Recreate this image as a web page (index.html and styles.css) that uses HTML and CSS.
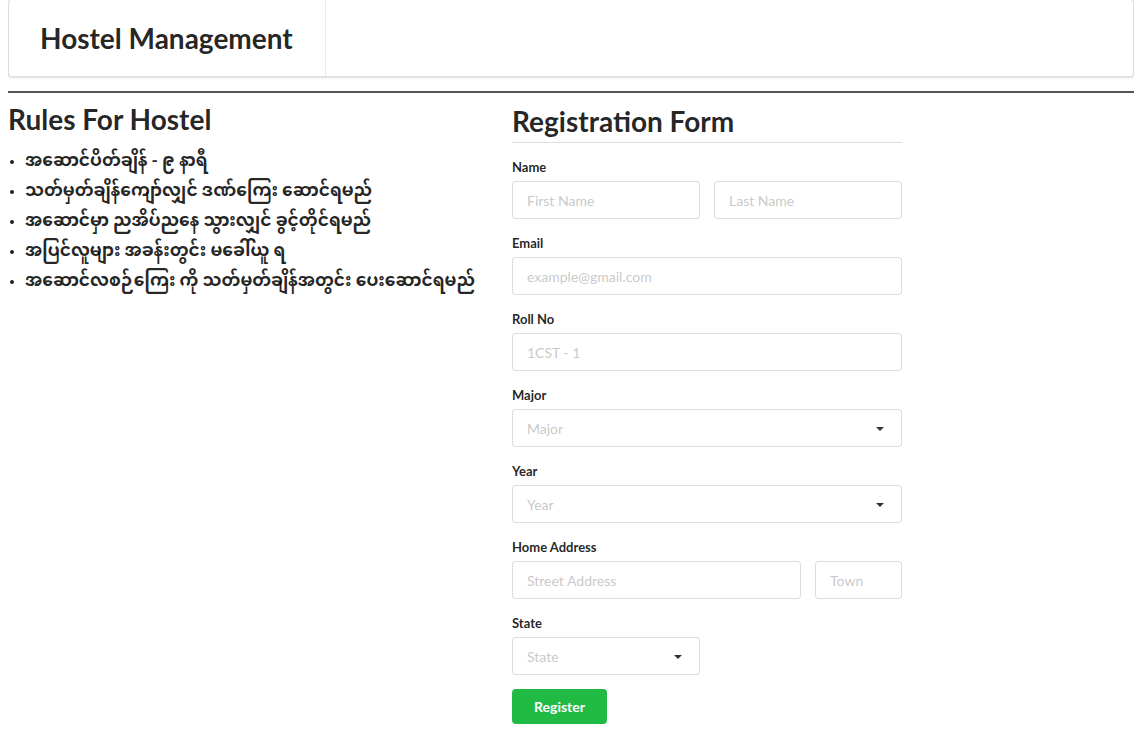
FILE: index.html
```html
<!DOCTYPE html>
<html lang="en">
<head>
<meta charset="utf-8">
<title>Hostel Management</title>
<link rel="stylesheet" href="styles.css">
</head>
<body>
<header class="menu">
  <div class="menu-item brand">Hostel Management</div>
</header>
<hr class="rule">
<main class="layout">
  <section class="rules">
    <h2 class="title">Rules For Hostel</h2>
    <ul class="rule-list">
      <li>အဆောင်ပိတ်ချိန် - ၉ နာရီ</li>
      <li>သတ်မှတ်ချိန်ကျော်လျှင် ဒဏ်ကြေး ဆောင်ရမည်</li>
      <li>အဆောင်မှာ ညအိပ်ညနေ သွားလျှင် ခွင့်တိုင်ရမည်</li>
      <li>အပြင်လူများ အခန်းတွင်း မခေါ်ယူ ရ</li>
      <li>အဆောင်လစဉ်ကြေး ကို သတ်မှတ်ချိန်အတွင်း ပေးဆောင်ရမည်</li>
    </ul>
  </section>
  <form class="form">
    <h2 class="title dividing">Registration Form</h2>
    <div class="field">
      <label class="label">Name</label>
      <div class="row half">
        <input class="input" placeholder="First Name">
        <input class="input" placeholder="Last Name">
      </div>
    </div>
    <div class="field">
      <label class="label">Email</label>
      <input class="input" placeholder="example@gmail.com">
    </div>
    <div class="field">
      <label class="label">Roll No</label>
      <input class="input" placeholder="1CST - 1">
    </div>
    <div class="field">
      <label class="label">Major</label>
      <div class="dropdown"><span class="placeholder">Major</span><span class="caret"></span></div>
    </div>
    <div class="field">
      <label class="label">Year</label>
      <div class="dropdown"><span class="placeholder">Year</span><span class="caret"></span></div>
    </div>
    <div class="field">
      <label class="label">Home Address</label>
      <div class="row address">
        <input class="input" placeholder="Street Address">
        <input class="input" placeholder="Town">
      </div>
    </div>
    <div class="field">
      <label class="label">State</label>
      <div class="row half">
        <div class="dropdown"><span class="placeholder">State</span><span class="caret"></span></div>
      </div>
    </div>
    <button type="button" class="button">Register</button>
  </form>
</main>
</body>
</html>
```

FILE: styles.css
```css
* { box-sizing: border-box; }

body {
  margin: 0 9px 0 8px;
  font-family: Lato, "Noto Sans Myanmar", Padauk, "Myanmar Text", "Noto Sans", sans-serif;
  font-size: 14px;
  line-height: 1.4285em;
  color: rgba(0, 0, 0, 0.87);
  background: #fff;
}

.menu {
  display: flex;
  margin-top: -1px;
  height: 78px;
  border: 1px solid rgba(34, 36, 38, 0.15);
  border-radius: 4px;
  box-shadow: 0 1px 2px 0 rgba(34, 36, 38, 0.15);
  background: #fff;
}

.menu-item {
  display: flex;
  align-items: center;
  padding: 0 32px 1px 31px;
  border-right: 1px solid rgba(34, 36, 38, 0.1);
}

.brand {
  font-size: 28px;
  font-weight: 700;
  color: rgba(0, 0, 0, 0.87);
}

.rule {
  margin: 14px 0 0;
  height: 2px;
  border: 0;
  background: #555;
}

.layout {
  display: grid;
  grid-template-columns: 504px 390px;
  align-items: start;
}

.title {
  margin: 0;
  font-size: 28px;
  font-weight: 700;
  line-height: 36px;
  color: rgba(0, 0, 0, 0.87);
}

.rules .title {
  margin-top: 8px;
}

.rule-list {
  margin: 8px 0 0;
  padding: 0 0 0 17px;
  font-weight: 700;
  font-size: 17px;
  line-height: 30px;
}

.rule-list li::marker {
  font-family: Lato, sans-serif;
  font-size: 13px;
}

.form {
  padding-top: 10px;
}

.dividing {
  padding-bottom: 3px;
  border-bottom: 1px solid rgba(34, 36, 38, 0.15);
  margin-bottom: 14px;
}

.field {
  margin-bottom: 14px;
}

.label {
  display: block;
  margin-bottom: 4px;
  font-size: 13px;
  font-weight: 700;
  line-height: 20px;
  color: rgba(0, 0, 0, 0.87);
}

.row {
  display: grid;
  gap: 14px;
}

.half {
  grid-template-columns: 1fr 1fr;
}

.address {
  grid-template-columns: 289px 87px;
}

.input,
.dropdown {
  display: flex;
  align-items: center;
  width: 100%;
  height: 38px;
  margin: 0;
  padding: 0 14px;
  font-family: inherit;
  font-size: 14px;
  color: rgba(0, 0, 0, 0.87);
  background: #fff;
  border: 1px solid rgba(34, 36, 38, 0.15);
  border-radius: 4px;
  outline: none;
}

.input::placeholder,
.placeholder {
  color: rgba(191, 191, 191, 0.87);
}

.dropdown {
  justify-content: space-between;
  padding-top: 2px;
}

.caret {
  width: 0;
  height: 0;
  margin-right: 3px;
  margin-bottom: 1px;
  border-left: 4px solid transparent;
  border-right: 4px solid transparent;
  border-top: 4px solid rgba(0, 0, 0, 0.8);
}

.button {
  height: 35px;
  padding: 0 22px;
  font-family: inherit;
  font-size: 14px;
  font-weight: 700;
  color: #fff;
  background: #21ba45;
  border: 0;
  border-radius: 4px;
}
```
